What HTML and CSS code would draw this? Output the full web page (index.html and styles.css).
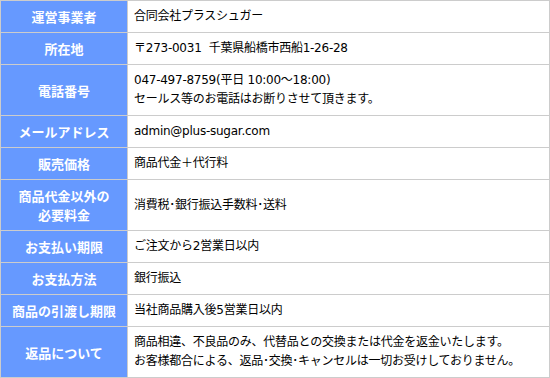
FILE: index.html
```html
<!DOCTYPE html>
<html lang="ja">
<head>
<meta charset="utf-8">
<link rel="stylesheet" href="styles.css">
</head>
<body>
<table class="info">
  <tr><th>運営事業者</th><td>合同会社プラスシュガー</td></tr>
  <tr><th>所在地</th><td>〒273-0031&nbsp;&nbsp;千葉県船橋市西船1-26-28</td></tr>
  <tr><th>電話番号</th><td>047-497-8759(平日 10:00～18:00)<br>セールス等のお電話はお断りさせて頂きます。</td></tr>
  <tr><th>メールアドレス</th><td>admin@plus-sugar.com</td></tr>
  <tr><th>販売価格</th><td>商品代金＋代行料</td></tr>
  <tr><th>商品代金以外の<br>必要料金</th><td>消費税･銀行振込手数料･送料</td></tr>
  <tr><th>お支払い期限</th><td>ご注文から2営業日以内</td></tr>
  <tr><th>お支払方法</th><td>銀行振込</td></tr>
  <tr><th>商品の引渡し期限</th><td>当社商品購入後5営業日以内</td></tr>
  <tr><th>返品について</th><td>商品相違、不良品のみ、代替品との交換または代金を返金いたします。<br>お客様都合による、返品･交換･キャンセルは一切お受けしておりません。</td></tr>
</table>
</body>
</html>
```
FILE: styles.css
```css
html, body {
  margin: 0;
  padding: 0;
  background: #fff;
}
.info {
  border-collapse: collapse;
  width: 550px;
  font-family: "Noto Sans CJK JP", "Noto Sans", sans-serif;
}
.info th, .info td {
  border: 1px solid #cccccc;
  padding: 6px 6px;
  line-height: 19px;
  vertical-align: middle;
}
.info th {
  background: #6699ff;
  color: #fff;
  font-size: 13px;
  font-weight: bold;
  text-align: center;
  padding: 6px 0;
  width: 126px;
}
.info td {
  color: #000;
  font-family: "DejaVu Sans", "Noto Sans CJK JP", sans-serif;
  font-size: 12px;
  letter-spacing: -0.25px;
  text-align: left;
}
```
